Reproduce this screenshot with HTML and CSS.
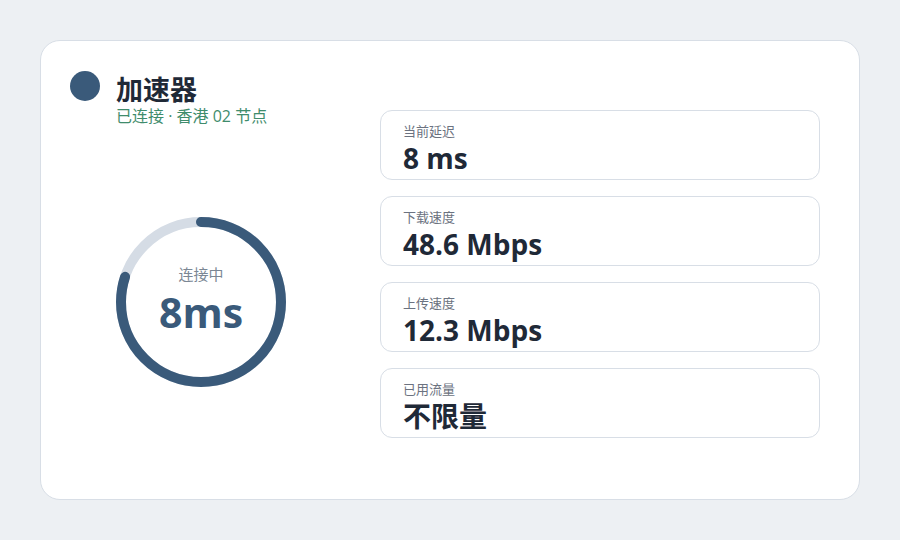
FILE: index.html
```html
<!DOCTYPE html>
<html lang="zh-CN">
<head>
    <meta charset="UTF-8">
    <meta name="viewport" content="width=device-width, initial-scale=1.0">
    <title>加速器</title>
    <link rel="stylesheet" href="styles.css">
</head>
<body>
    <div class="card">
        <div class="left-col">
            <div class="header">
                <div class="status-dot"></div>
                <div class="header-text">
                    <h1>加速器</h1>
                    <p class="subtitle">已连接 · 香港 02 节点</p>
                </div>
            </div>

            <div class="ring-wrap">
                <div class="ring">
                    <svg width="180" height="180" viewBox="0 0 180 180">
                        <circle cx="90" cy="90" r="80" fill="none" stroke="#d5dce5" stroke-width="10"/>
                        <circle cx="90" cy="90" r="80" fill="none" stroke="#3a5a7a" stroke-width="10"
                            stroke-linecap="round" stroke-dasharray="402 503"
                            transform="rotate(-90 90 90)"/>
                    </svg>
                    <div class="ring-text">
                        <div class="ring-label">连接中</div>
                        <div class="ring-value">8ms</div>
                    </div>
                </div>
            </div>
        </div>

        <div class="stats">
            <div class="stat">
                <div class="stat-label">当前延迟</div>
                <div class="stat-value">8 ms</div>
            </div>
            <div class="stat">
                <div class="stat-label">下载速度</div>
                <div class="stat-value">48.6 Mbps</div>
            </div>
            <div class="stat">
                <div class="stat-label">上传速度</div>
                <div class="stat-value">12.3 Mbps</div>
            </div>
            <div class="stat">
                <div class="stat-label">已用流量</div>
                <div class="stat-value">不限量</div>
            </div>
        </div>
    </div>
</body>
</html>
```

FILE: styles.css
```css
body {
    margin: 0;
    background: #edf0f3;
    font-family: 'Open Sans', 'Noto Sans CJK SC', sans-serif;
    color: #1f2937;
}

.card {
    box-sizing: border-box;
    width: 820px;
    height: 460px;
    margin: 40px;
    background: #ffffff;
    border: 1px solid #d8dee6;
    border-radius: 20px;
    padding: 29px 39px 29px 29px;
    display: grid;
    grid-template-columns: 262px 440px;
    column-gap: 48px;
}

.left-col {
    display: flex;
    flex-direction: column;
}

.header {
    display: flex;
    align-items: flex-start;
    gap: 16px;
}

.status-dot {
    width: 30px;
    height: 30px;
    border-radius: 50%;
    background: #3a5a7a;
    margin-top: 1px;
    flex-shrink: 0;
}

.header-text {
    margin-top: 3px;
}

.header-text h1 {
    margin: 0;
    font-size: 27px;
    font-weight: 700;
    line-height: 34px;
    color: #1f2937;
}

.subtitle {
    margin: 0;
    font-size: 16px;
    line-height: 18px;
    color: #3f8c6c;
}

.ring-wrap {
    flex: 1;
    display: flex;
    align-items: center;
    justify-content: center;
    padding-top: 8px;
}

.ring {
    position: relative;
    width: 180px;
    height: 180px;
}

.ring svg {
    display: block;
}

.ring-text {
    position: absolute;
    inset: 0;
    display: flex;
    flex-direction: column;
    align-items: center;
    justify-content: center;
}

.ring-label {
    font-size: 15px;
    color: #7b8794;
    line-height: 20px;
}

.ring-value {
    font-size: 41px;
    font-weight: 700;
    color: #3a5a7a;
    line-height: 56px;
}

.stats {
    margin-top: 40px;
    display: flex;
    flex-direction: column;
    gap: 16px;
}

.stat {
    box-sizing: border-box;
    height: 70px;
    border: 1px solid #d8dee6;
    border-radius: 12px;
    padding: 11px 22px 0;
}

.stat-label {
    font-size: 13px;
    line-height: 18px;
    color: #6b7280;
}

.stat-value {
    font-size: 28px;
    font-weight: 700;
    line-height: 36px;
    color: #1f2937;
}
```
